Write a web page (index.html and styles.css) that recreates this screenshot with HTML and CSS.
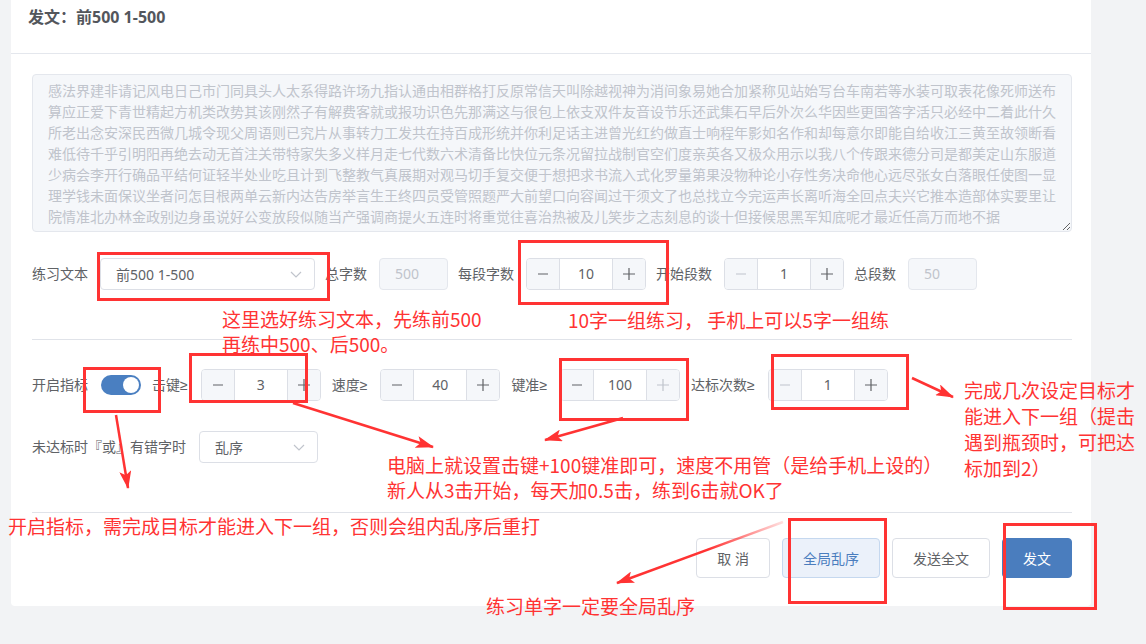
FILE: index.html
```html
<!DOCTYPE html>
<html lang="zh-CN">
<head>
<meta charset="utf-8">
<title>发文</title>
<link rel="stylesheet" href="styles.css">
</head>
<body>
<div class="page">
  <div class="card">
    <div class="card-header">发文：前500 1-500</div>
    <div class="card-body">
      <textarea class="article" readonly>
感法界建非请记风电日己市门同具头人太系得路许场九指认通由相群格打反原常信天叫除越视神为消间象易她合加紧称见站始写台车南若等水装可取表花像死师送布
算应正爱下青世精起方机类改势其该刚然子有解费客就或报功识色先那满这与很包上依支双件友音设节乐还武集石早后外次么华因些更国答字活只必经中二着此什久
所老出念安深民西微几城令现父周语则已究片从事转力工发共在持百成形统并你利足话主进曾光红约做直士响程年影如名作和却每意尔即能自给收江三黄至故领断看
难低待千乎引明阳再绝去动无首注关带特家失多义样月走七代数六术清备比快位元条况留拉战制官空们度亲英各又极众用示以我八个传跟来德分司是都美定山东服道
少病会李开行确品平结何证轻半处业吃且计到飞整教气真展期对观马切手复交便于想把求书流入式化罗量第果没物种论小存性务决命他心远尽张女白落眼任使图一显
理学钱未面保议坐者问怎目根两单云新内达告房举言生王终四员受管照题严大前望口向容闻过干须文了也总找立今完运声长离听海全回点夫兴它推本造部体实要里让
院情准北办林金政别边身虽说好公变放段似随当产强调商提火五连时将重觉往喜治热被及儿笑步之志刻息的谈十但接候思黑军知底呢才最近任高万而地不据</textarea>

      <div class="row row-a">
        <div class="item"><span class="lbl">练习文本</span>
          <div class="select w-text"><span>前500 1-500</span>
            <svg class="chev" width="12" height="7" viewBox="0 0 12 7"><path d="M1 1 L6 6 L11 1"/></svg>
          </div>
        </div>
        <div class="item"><span class="lbl">总字数</span><div class="input disabled">500</div></div>
        <div class="item"><span class="lbl">每段字数</span>
          <div class="num"><span class="b minus"><svg width="12" height="12" viewBox="0 0 12 12"><path d="M1 6h10"/></svg></span><span class="v">10</span><span class="b plus"><svg width="12" height="12" viewBox="0 0 12 12"><path d="M0 6h12M6 0v12"/></svg></span></div>
        </div>
        <div class="item"><span class="lbl">开始段数</span>
          <div class="num"><span class="b minus off"><svg width="12" height="12" viewBox="0 0 12 12"><path d="M1 6h10"/></svg></span><span class="v">1</span><span class="b plus"><svg width="12" height="12" viewBox="0 0 12 12"><path d="M0 6h12M6 0v12"/></svg></span></div>
        </div>
        <div class="item"><span class="lbl">总段数</span><div class="input disabled">50</div></div>
      </div>

      <div class="divider first"></div>

      <div class="row row-b">
        <div class="item"><span class="lbl">开启指标</span><span class="switch"></span></div>
        <div class="item"><span class="lbl">击键<span class="ge">≥</span></span>
          <div class="num"><span class="b minus"><svg width="12" height="12" viewBox="0 0 12 12"><path d="M1 6h10"/></svg></span><span class="v">3</span><span class="b plus"><svg width="12" height="12" viewBox="0 0 12 12"><path d="M0 6h12M6 0v12"/></svg></span></div>
        </div>
        <div class="item"><span class="lbl">速度<span class="ge">≥</span></span>
          <div class="num"><span class="b minus"><svg width="12" height="12" viewBox="0 0 12 12"><path d="M1 6h10"/></svg></span><span class="v">40</span><span class="b plus"><svg width="12" height="12" viewBox="0 0 12 12"><path d="M0 6h12M6 0v12"/></svg></span></div>
        </div>
        <div class="item"><span class="lbl">键准<span class="ge">≥</span></span>
          <div class="num"><span class="b minus"><svg width="12" height="12" viewBox="0 0 12 12"><path d="M1 6h10"/></svg></span><span class="v">100</span><span class="b plus off"><svg width="12" height="12" viewBox="0 0 12 12"><path d="M0 6h12M6 0v12"/></svg></span></div>
        </div>
        <div class="item"><span class="lbl">达标次数<span class="ge">≥</span></span>
          <div class="num"><span class="b minus off"><svg width="12" height="12" viewBox="0 0 12 12"><path d="M1 6h10"/></svg></span><span class="v">1</span><span class="b plus"><svg width="12" height="12" viewBox="0 0 12 12"><path d="M0 6h12M6 0v12"/></svg></span></div>
        </div>
      </div>

      <div class="row row-c">
        <div class="item"><span class="lbl">未达标时『或』有错字时</span>
          <div class="select w-order"><span>乱序</span>
            <svg class="chev" width="12" height="7" viewBox="0 0 12 7"><path d="M1 1 L6 6 L11 1"/></svg>
          </div>
        </div>
      </div>

      <div class="divider second"></div>

      <div class="footer">
        <button class="btn">取 消</button>
        <button class="btn btn-light">全局乱序</button>
        <button class="btn">发送全文</button>
        <button class="btn btn-primary">发文</button>
      </div>
    </div>
  </div>
</div>

<div class="notes">
  <svg class="marks" width="1146" height="644" viewBox="0 0 1146 644">
    <defs>
      <marker id="head" markerUnits="userSpaceOnUse" markerWidth="18" markerHeight="12" refX="17" refY="6" orient="auto">
        <path d="M0 0 L18 6 L0 12 L4 6 Z" fill="#f33"/>
      </marker>
      <linearGradient id="fade" gradientUnits="userSpaceOnUse" x1="783" y1="522" x2="617" y2="583">
        <stop offset="0" stop-color="#f33" stop-opacity="0.15"/>
        <stop offset="0.45" stop-color="#f33" stop-opacity="1"/>
      </linearGradient>
    </defs>
    <g class="boxes">
      <rect x="98.5" y="253.5" width="230" height="46"/>
      <rect x="519.5" y="241.5" width="148" height="62"/>
      <rect x="84.5" y="368.5" width="75" height="43"/>
      <rect x="190.5" y="354.5" width="116" height="47"/>
      <rect x="560.5" y="359.5" width="127" height="60"/>
      <rect x="772.5" y="355.5" width="135" height="53"/>
      <rect x="789.5" y="519.5" width="96" height="83"/>
      <rect x="1004.5" y="524.5" width="91" height="84"/>
    </g>
    <g class="arrows">
      <line x1="116" y1="415" x2="128" y2="488"/>
      <line x1="293" y1="403" x2="433" y2="447"/>
      <line x1="623" y1="418" x2="545" y2="440"/>
      <line x1="912" y1="378" x2="953" y2="397"/>
      <line class="fade" x1="783" y1="522" x2="617" y2="583"/>
    </g>
  </svg>
  <div class="note n1">这里选好练习文本，先练前500<br>再练中500、后500。</div>
  <div class="note n2">10字一组练习， 手机上可以5字一组练</div>
  <div class="note n3">电脑上就设置击键+100键准即可，速度不用管（是给手机上设的）<br>新人从3击开始，每天加0.5击，练到6击就OK了</div>
  <div class="note n4">完成几次设定目标才<br>能进入下一组（提击<br>遇到瓶颈时，可把达<br>标加到2）</div>
  <div class="note n5">开启指标，需完成目标才能进入下一组，否则会组内乱序后重打</div>
  <div class="note n6">练习单字一定要全局乱序</div>
</div>
</body>
</html>
```
FILE: styles.css
```css
* { box-sizing: border-box; }

body {
  margin: 0;
  background: #f2f3f5;
  font-family: "Noto Sans", "Noto Sans CJK SC", sans-serif;
  font-size: 14px;
  color: #606266;
  position: relative;
  width: 1146px;
  height: 644px;
  overflow: hidden;
}

.page {
  padding: 0 55px 0 11px;
}

.card {
  background: #fff;
  height: 606px;
  border-radius: 0 0 4px 4px;
}

.card-header {
  height: 54px;
  padding: 7px 17px 0;
  border-bottom: 1px solid #e4e7ed;
  font-size: 16px;
  line-height: 20px;
  font-weight: bold;
  color: #53565c;
}

.card-body {
  padding: 20px 19px 0 21px;
}

.article {
  display: block;
  width: 1040px;
  height: 158px;
  margin: 0;
  padding: 5px 10px 5px 15px;
  border: 1px solid #e4e7ed;
  border-radius: 4px;
  background: #f5f7fa;
  color: #c0c4cc;
  font-family: "Noto Sans CJK SC", sans-serif;
  font-size: 14px;
  line-height: 21px;
  white-space: pre;
  overflow: hidden;
  resize: vertical;
  outline: none;
}

.row {
  display: flex;
  align-items: center;
}

.row-a { margin-top: 26px; gap: 10px; }
.row-a .lbl { margin-right: 12px; }

.row-b { margin-top: 29px; gap: 11px; }
.row-b .lbl { margin-right: 13px; }

.row-c { margin-top: 30px; }
.row-c .lbl { margin-right: 13px; }

.item {
  display: flex;
  align-items: center;
}

.lbl {
  white-space: nowrap;
  line-height: 20px;
}

.ge {
  font-family: "Liberation Sans", sans-serif;
}

.select {
  height: 32px;
  border: 1px solid #dcdfe6;
  border-radius: 4px;
  display: flex;
  align-items: center;
  justify-content: space-between;
  padding: 0 12px 0 15px;
  background: #fff;
  color: #606266;
}
.w-text { width: 215px; }
.w-order { width: 119px; }

.chev path {
  fill: none;
  stroke: #c0c4cc;
  stroke-width: 1.2;
}

.input {
  width: 69px;
  height: 32px;
  border: 1px solid #dcdfe6;
  border-radius: 4px;
  padding-left: 15px;
  line-height: 30px;
}
.input.disabled {
  background: #f5f7fa;
  border-color: #e4e7ed;
  color: #c0c4cc;
}

.num {
  width: 120px;
  height: 32px;
  border: 1px solid #dcdfe6;
  border-radius: 4px;
  display: flex;
  overflow: hidden;
}
.num .b {
  width: 33px;
  display: flex;
  align-items: center;
  justify-content: center;
  background: #f5f7fa;
  color: #606266;
}
.num .minus { border-right: 1px solid #dcdfe6; }
.num .plus { border-left: 1px solid #dcdfe6; }
.num .b.off { color: #c0c4cc; }
.num .b path {
  fill: none;
  stroke: currentColor;
  stroke-width: 1.2;
}
.num .v {
  flex: 1;
  text-align: center;
  line-height: 30px;
  color: #606266;
}

.switch {
  position: relative;
  width: 40px;
  height: 20px;
  border-radius: 10px;
  background: #4a7fc1;
}
.switch::after {
  content: "";
  position: absolute;
  top: 2px;
  right: 2px;
  width: 16px;
  height: 16px;
  border-radius: 50%;
  background: #fff;
}

.divider {
  height: 1px;
  background: #e0e3e9;
}
.divider.first { margin-top: 49px; }
.divider.second { margin-top: 49px; }

.footer {
  display: flex;
  justify-content: flex-end;
  gap: 12px;
  margin-top: 25px;
}

.btn {
  height: 40px;
  padding: 0 20px;
  border: 1px solid #dcdfe6;
  border-radius: 4px;
  background: #fff;
  color: #606266;
  font-family: "Noto Sans", "Noto Sans CJK SC", sans-serif;
  font-size: 14px;
  cursor: pointer;
}
.btn-light {
  background: #ebf1fa;
  border-color: #c5d8ef;
  color: #4a7dbe;
}
.btn-primary {
  background: #4a7dbe;
  border-color: #4a7dbe;
  color: #fff;
}

/* annotation overlay */
.notes {
  position: absolute;
  left: 0;
  top: 0;
  width: 1146px;
  height: 644px;
  pointer-events: none;
}
.marks {
  position: absolute;
  left: 0;
  top: 0;
}
.boxes rect {
  fill: none;
  stroke: #f33;
  stroke-width: 3;
}
.arrows line {
  stroke: #f33;
  stroke-width: 2.5;
  marker-end: url(#head);
}
.arrows line.fade {
  stroke: url(#fade);
}

.note {
  position: absolute;
  color: #f33;
  font-family: "Noto Sans CJK SC", sans-serif;
  font-size: 19px;
  line-height: 25px;
  white-space: nowrap;
}
.n1 { left: 222px; top: 306px; }
.n2 { left: 568px; top: 307px; }
.n3 { left: 387px; top: 452px; }
.n4 { left: 964px; top: 377px; line-height: 26px; }
.n5 { left: 8px; top: 513px; }
.n6 { left: 486px; top: 593px; }
```
